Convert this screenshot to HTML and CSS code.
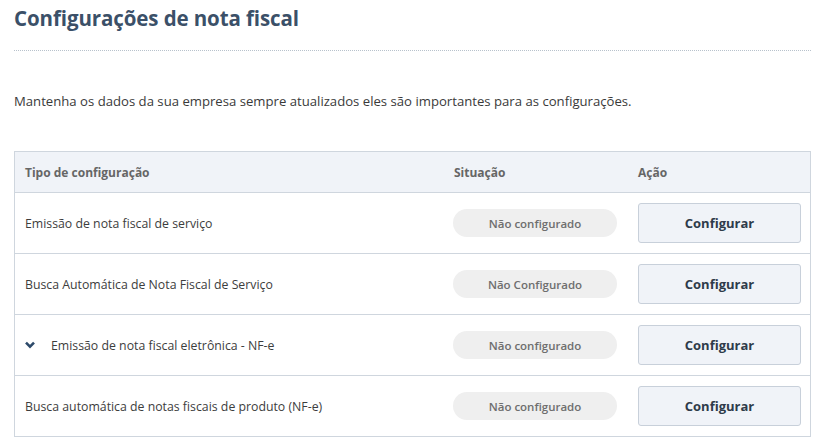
FILE: index.html
```html
<!DOCTYPE html>
<html lang="pt-BR">
<head>
<meta charset="utf-8">
<link rel="stylesheet" href="styles.css">
</head>
<body>
<div class="page">
  <h1 class="title">Configurações de nota fiscal</h1>
  <p class="intro">Mantenha os dados da sua empresa sempre atualizados eles são importantes para as configurações.</p>
  <div class="table">
    <div class="row head">
      <div class="cell c1">Tipo de configuração</div>
      <div class="cell c2">Situação</div>
      <div class="cell c3">Ação</div>
    </div>
    <div class="row">
      <div class="cell c1">Emissão de nota fiscal de serviço</div>
      <div class="cell c2"><span class="pill">Não configurado</span></div>
      <div class="cell c3"><button class="btn">Configurar</button></div>
    </div>
    <div class="row">
      <div class="cell c1">Busca Automática de Nota Fiscal de Serviço</div>
      <div class="cell c2"><span class="pill">Não Configurado</span></div>
      <div class="cell c3"><button class="btn">Configurar</button></div>
    </div>
    <div class="row">
      <div class="cell c1"><svg class="chev" width="10" height="8" viewBox="0 0 10 8"><path d="M1 1.6 L5 5.6 L9 1.6" fill="none" stroke="#2d4a6a" stroke-width="2.6" stroke-linecap="butt"/></svg><span class="indent">Emissão de nota fiscal eletrônica - NF-e</span></div>
      <div class="cell c2"><span class="pill">Não configurado</span></div>
      <div class="cell c3"><button class="btn">Configurar</button></div>
    </div>
    <div class="row">
      <div class="cell c1">Busca automática de notas fiscais de produto (NF-e)</div>
      <div class="cell c2"><span class="pill">Não configurado</span></div>
      <div class="cell c3"><button class="btn">Configurar</button></div>
    </div>
  </div>
</div>
</body>
</html>
```
FILE: styles.css
```css
* { box-sizing: border-box; }
html, body { margin: 0; padding: 0; background: #fff; }
body { font-family: "Open Sans", "Liberation Sans", sans-serif; color: #3a3a3a; }
.page { padding: 0 13px 0 14px; }
.title {
  margin: 0;
  padding-top: 4px;
  height: 51px;
  font-size: 20.5px;
  font-weight: 700;
  color: #3b5068;
  border-bottom: 1px dotted #b8c2cc;
  line-height: 28px;
  letter-spacing: -0.1px;
}
.intro {
  margin: 0;
  padding-top: 41px;
  height: 100px;
  font-size: 13.15px;
  line-height: 18px;
  color: #3a3a3a;
}
.table {
  border: 1px solid #cfd6de;
  border-bottom: none;
}
.row {
  display: grid;
  grid-template-columns: 439px 184px 1fr;
  height: 61px;
  border-bottom: 1px solid #cfd6de;
  align-items: center;
}
.row.head {
  height: 41px;
  background: #f0f3f8;
  font-weight: 700;
  color: #666;
  font-size: 12px;
}
.cell { display: flex; align-items: center; }
.c1 { padding-left: 10px; font-size: 12.3px; color: #3d3d3d; }
.head .c1 { font-size: 12px; color: #666; }
.chev { margin-right: 16px; }
.pill {
  display: flex;
  align-items: center;
  justify-content: center;
  width: 164px;
  height: 28px;
  border-radius: 14px;
  background: #efefef;
  color: #6e6e6e;
  font-size: 11.5px;
  font-weight: 600;
  margin-left: -1px;
}
.btn {
  width: 163px;
  height: 40px;
  background: #f0f3f8;
  border: 1px solid #c8d0da;
  border-radius: 3px;
  font-family: inherit;
  font-size: 13px;
  font-weight: 700;
  color: #2e3b4a;
}
```
